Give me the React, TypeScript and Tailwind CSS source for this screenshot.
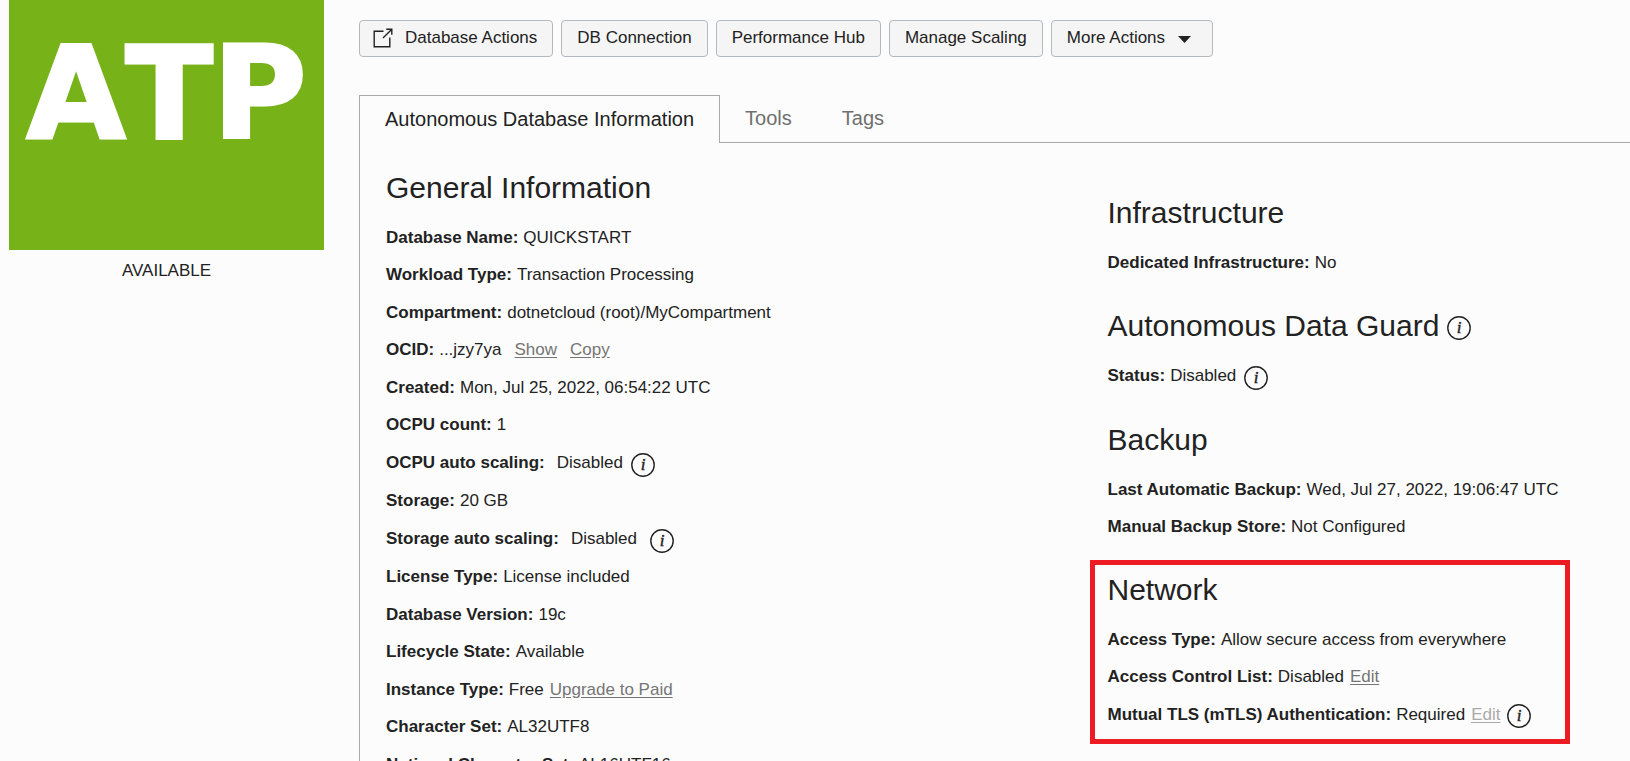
import type { ReactNode } from "react";

function InfoIcon({ label }: { label: string }) {
  return (
    <button type="button" aria-label={label} className="mt-[3px] shrink-0">
      <svg width="24" height="24" viewBox="0 0 24 24" className="block" aria-hidden="true">
        <circle cx="12" cy="12" r="11.2" fill="none" stroke="#222" strokeWidth="1.4" />
        <text
          x="12"
          y="17.2"
          textAnchor="middle"
          className="fill-[#222] stroke-[#222] stroke-[0.4px] font-['Liberation_Serif',serif] text-[17px] italic"
        >
          i
        </text>
      </svg>
    </button>
  );
}

function ExternalIcon() {
  return (
    <svg
      width="20"
      height="20"
      viewBox="0 0 20 20"
      fill="none"
      stroke="#222"
      strokeWidth="1.4"
      className="-ml-[2px]"
      aria-hidden="true"
    >
      <path d="M10.5 3.2H1.2V18.8H16.8V9.5" />
      <path d="M10 10 18.8 1.2M13.2 1.2H18.8V6.8" />
    </svg>
  );
}

function ActionButton({ children }: { children: ReactNode }) {
  return (
    <button
      type="button"
      className="flex h-[37px] items-center rounded-[4px] border border-[#b3b9c1] bg-[#f5f5f5] px-[15px] pb-[2px] text-[17px] leading-6"
    >
      {children}
    </button>
  );
}

function Row({ label, wide, children }: { label: string; wide?: boolean; children: ReactNode }) {
  return (
    <div
      className={
        wide
          ? "flex h-[38px] items-center whitespace-nowrap"
          : "flex items-center whitespace-nowrap odd:h-[37px] even:h-[38px]"
      }
    >
      <dt className="mr-[5px] font-bold">{label}:</dt>
      <dd className="flex items-center">{children}</dd>
    </div>
  );
}

function TextLink({ children, muted }: { children: ReactNode; muted?: boolean }) {
  return (
    <a
      href="#"
      className={muted ? "text-[#aaa] underline underline-offset-2" : "text-[#757575] underline underline-offset-2"}
    >
      {children}
    </a>
  );
}

function Section({ title, info, children }: { title: string; info?: boolean; children: ReactNode }) {
  return (
    <section>
      <h2 className="mb-[13px] flex items-center gap-2 text-[30px] leading-9">
        {title}
        {info && <InfoIcon label={`About ${title}`} />}
      </h2>
      <dl>{children}</dl>
    </section>
  );
}

export default function App() {
  return (
    <div className="flex h-screen overflow-hidden bg-[#fcfcfc] pl-[9px] font-['Liberation_Sans',Arial,sans-serif] text-[17px] leading-6 text-[#222]">
      <aside className="w-[315px] shrink-0 text-center">
        <div className="h-[250px] bg-[#77b219] pt-[34px]">
          <div className="font-['DejaVu_Sans',sans-serif] text-[128px] leading-[120px] font-bold text-white [-webkit-text-stroke:3px_white] [font-kerning:none]">
            ATP
          </div>
        </div>
        <p className="mt-[9px]">AVAILABLE</p>
      </aside>

      <main className="ml-[35px] min-w-0 flex-1 pt-5">
        <div className="flex gap-2">
          <ActionButton>
            <ExternalIcon />
            <span className="ml-3">Database Actions</span>
          </ActionButton>
          <ActionButton>DB Connection</ActionButton>
          <ActionButton>Performance Hub</ActionButton>
          <ActionButton>Manage Scaling</ActionButton>
          <ActionButton>
            More Actions
            <svg width="13" height="7" viewBox="0 0 13 7" className="mt-[3px] mr-[6px] ml-[13px]" aria-hidden="true">
              <path d="M0 0H13L6.5 7Z" fill="#222" />
            </svg>
          </ActionButton>
        </div>

        <div role="tablist" className="mt-[38px] flex h-12 text-[20px] leading-6">
          <button
            type="button"
            role="tab"
            aria-selected="true"
            className="border border-b-0 border-[#a9a9a9] px-[25px] pb-[2px]"
          >
            Autonomous Database Information
          </button>
          <div className="flex flex-1 gap-[50px] border-b border-[#a9a9a9] pl-[25px] text-[#6f6f6f]">
            <button type="button" role="tab" aria-selected="false" className="pb-[2px]">
              Tools
            </button>
            <button type="button" role="tab" aria-selected="false" className="pb-[2px]">
              Tags
            </button>
          </div>
        </div>

        <div
          role="tabpanel"
          className="grid h-full grid-cols-[58fr_42fr] border-l border-[#a9a9a9] pt-[27px] pl-[26px]"
        >
          <Section title="General Information">
            <Row label="Database Name">QUICKSTART</Row>
            <Row label="Workload Type">Transaction Processing</Row>
            <Row label="Compartment">dotnetcloud (root)/MyCompartment</Row>
            <Row label="OCID">
              <span className="mr-[13px]">...jzy7ya</span>
              <span className="flex gap-[13px]">
                <TextLink>Show</TextLink>
                <TextLink>Copy</TextLink>
              </span>
            </Row>
            <Row label="Created">Mon, Jul 25, 2022, 06:54:22 UTC</Row>
            <Row label="OCPU count">1</Row>
            <Row label="OCPU auto scaling" wide>
              <span className="mr-2 ml-[7px]">Disabled</span>
              <InfoIcon label="About OCPU auto scaling" />
            </Row>
            <Row label="Storage">20 GB</Row>
            <Row label="Storage auto scaling" wide>
              <span className="mr-[13px] ml-[7px]">Disabled</span>
              <InfoIcon label="About storage auto scaling" />
            </Row>
            <Row label="License Type">License included</Row>
            <Row label="Database Version">19c</Row>
            <Row label="Lifecycle State">Available</Row>
            <Row label="Instance Type">
              <span className="mr-[6px]">Free</span>
              <TextLink>Upgrade to Paid</TextLink>
            </Row>
            <Row label="Character Set">AL32UTF8</Row>
            <Row label="National Character Set">AL16UTF16</Row>
          </Section>

          <div className="flex flex-col gap-[27px] pt-[25px]">
            <Section title="Infrastructure">
              <Row label="Dedicated Infrastructure">No</Row>
            </Section>
            <Section title="Autonomous Data Guard" info>
              <Row label="Status" wide>
                <span className="mr-2">Disabled</span>
                <InfoIcon label="About Data Guard status" />
              </Row>
            </Section>
            <Section title="Backup">
              <Row label="Last Automatic Backup">Wed, Jul 27, 2022, 19:06:47 UTC</Row>
              <Row label="Manual Backup Store">Not Configured</Row>
            </Section>
            <div className="-mt-[13px] -ml-[18px] w-[480px] border-5 border-[#ed1c24] px-[13px] pt-[7px] pb-[6px]">
              <Section title="Network">
                <Row label="Access Type">Allow secure access from everywhere</Row>
                <Row label="Access Control List">
                  <span className="mr-[6px]">Disabled</span>
                  <TextLink>Edit</TextLink>
                </Row>
                <Row label="Mutual TLS (mTLS) Authentication">
                  <span className="mr-[6px]">Required</span>
                  <span className="mr-[7px]">
                    <TextLink muted>Edit</TextLink>
                  </span>
                  <InfoIcon label="About mutual TLS" />
                </Row>
              </Section>
            </div>
          </div>
        </div>
      </main>
    </div>
  );
}
